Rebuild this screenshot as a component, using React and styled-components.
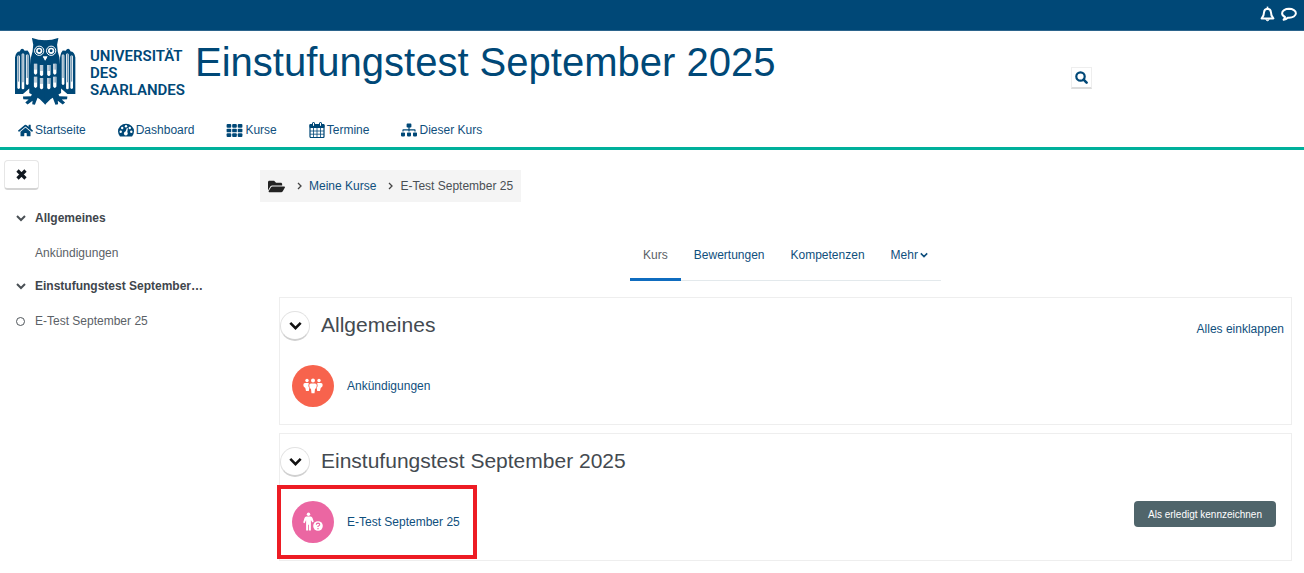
import React from 'react';
import styled, { createGlobalStyle } from 'styled-components'
import { FaHome, FaSitemap, FaFolderOpen } from 'react-icons/fa'


const colors = {
  blue: '#004877',
  link: '#0f4f7d',
  teal: '#00b09b',
  text: '#4a5055',
  line: '#eeeeee',
}

const GlobalStyle = createGlobalStyle`
  * {
    box-sizing: border-box;
  }
  body {
    margin: 0;
    background: #ffffff;
    color: ${colors.text};
    font-family: "Liberation Sans", Arial, sans-serif;
    font-size: 12px;
    line-height: 16px;
  }
  a {
    color: ${colors.link};
    text-decoration: none;
  }
  button {
    font-family: inherit;
    cursor: pointer;
  }
  svg {
    display: block;
    flex: none;
  }
`;

const TopBar = styled.div`
  display: flex;
  align-items: center;
  justify-content: flex-end;
  gap: 6px;
  height: 31px;
  padding: 0 7px 3px;
  background: ${colors.blue};
  border-bottom: 1px solid #2b648c;
`;

const IconButton = styled.button`
  padding: 0;
  border: 0;
  background: none;
  color: #ffffff;
`;

const Header = styled.header`
  border-bottom: 3px solid ${colors.teal};
`;

const Brand = styled.div`
  display: flex;
  align-items: flex-start;
  padding: 7px 212px 0 15px;
`;

const Logo = styled.a`
  display: flex;
  gap: 14px;
  color: ${colors.blue};
`;

const LogoText = styled.span`
  width: 96px;
  padding-top: 10px;
  font-family: Roboto, "Liberation Sans", sans-serif;
  font-size: 15px;
  font-weight: 600;
  line-height: 17px;
`;

const Title = styled.h1`
  margin: 0 0 0 9px;
  color: ${colors.blue};
  font-size: 40px;
  font-weight: 400;
  line-height: 48px;
`;

const SearchButton = styled.button`
  display: flex;
  align-items: center;
  justify-content: center;
  width: 21px;
  height: 22px;
  margin: 29px 0 0 auto;
  padding: 0;
  border: 1px solid #eeeeee;
  border-bottom: 2px solid #dcdcdc;
  background: #ffffff;
  color: ${colors.blue};
`;

const Nav = styled.nav`
  display: flex;
  gap: 32px;
  padding: 16px 18px 9px;
`;

const NavLink = styled.a`
  display: flex;
  align-items: center;
  gap: 2px;
  color: ${colors.link};

  svg {
    color: ${colors.blue};
  }
`;

const Page = styled.div`
  display: grid;
  grid-template-columns: 260px minmax(0, 1fr);
`;

const Sidebar = styled.aside`
  padding: 10px 4px;
`;

const CloseButton = styled.button`
  display: flex;
  align-items: center;
  justify-content: center;
  width: 35px;
  height: 30px;
  padding: 0;
  border: 1px solid #e6e6e6;
  border-bottom: 2px solid #d4d4d4;
  border-radius: 4px;
  background: #ffffff;
  color: #111820;
`;

const IndexList = styled.ul`
  margin: 20px 0 0;
  padding: 0 0 0 12px;
  list-style: none;
`;

const IndexItem = styled.li`
  display: grid;
  grid-template-columns: 10px 1fr;
  align-items: center;
  column-gap: 9px;
  height: 16px;
  margin-bottom: ${(props) => props.$section ? '19px' : '17px'};
  font-weight: ${(props) => props.$section ? 700 : 400};

  a {
    grid-column: 2;
    color: ${(props) => props.$section ? '#3f464c' : '#5b6166'};
  }
`;

const Dot = styled.span`
  width: 9px;
  height: 9px;
  border: 1px solid #50565b;
  border-radius: 50%;
`;

const Main = styled.main`
  padding: 20px 12px 0 0;
`;

const Breadcrumb = styled.nav`
  display: inline-flex;
  align-items: center;
  height: 32px;
  padding: 0 8px;
  background: #f4f4f4;

  > svg {
    margin: 0 7px 0 12px;
  }
`;

const FolderLink = styled.a`
  color: #222222;
`;

const Content = styled.div`
  padding-left: 19px;
`;

const Tabs = styled.nav`
  display: flex;
  width: fit-content;
  margin: 28px auto 16px;
  border-bottom: 1px solid #e3e9ec;
`;

const Tab = styled.a`
  display: flex;
  align-items: center;
  gap: 2px;
  height: 51px;
  margin-bottom: -1px;
  padding: 2px 13px 0;
  border-bottom: 3px solid ${(props) => props.$active ? '#0f6cbf' : 'transparent'};
  color: ${(props) => props.$active ? '#5b6166' : colors.link};
`;

const Section = styled.section`
  min-height: 128px;
  margin-bottom: 8px;
  border: 1px solid ${colors.line};
`;

const SectionHead = styled.div`
  display: flex;
  align-items: center;
  padding: 13px 7px 0 0;
`;

const Toggle = styled.button`
  display: flex;
  align-items: center;
  justify-content: center;
  width: 30px;
  height: 30px;
  padding: 0;
  border: 1px solid #e2e2e2;
  border-bottom: 2px solid #d0d0d0;
  border-radius: 50%;
  background: #ffffff;
  color: #111111;
`;

const SectionTitle = styled.h2`
  flex: 1;
  margin: 0 0 0 11px;
  padding-bottom: 2px;
  color: #444a50;
  font-size: 21px;
  font-weight: 400;
  line-height: 28px;
`;

const CollapseLink = styled.a`
  padding-top: 6px;
`;

const Activity = styled.div`
  position: relative;
  display: flex;
  align-items: center;
  margin-top: 12px;
  padding: 12px 15px 12px 12px;
`;

const ActivityIcon = styled.span`
  display: flex;
  align-items: center;
  justify-content: center;
  width: 42px;
  height: 42px;
  margin-right: 13px;
  border-radius: 50%;
  background: ${(props) => props.$color};
`;

const DoneButton = styled.button`
  align-self: flex-start;
  height: 26px;
  margin-left: auto;
  padding: 0 14px;
  border: 0;
  border-radius: 4px;
  background: #50656b;
  color: #ffffff;
  font-size: 10px;
`;

// red frame lying over the activity
const Highlight = styled.div`
  position: absolute;
  top: -4px;
  left: -3px;
  width: 200px;
  height: 74px;
  border: 4px solid #ed1c24;
  pointer-events: none;
`;


// one half of the bird, the other half is the same mirrored
const OwlHalf = () => (
  <>
    <path d="M101 18Q78 18 60 11L64 32L62 52L57 70V92Q56 58 47 49L38 50Q34 42 27 45L23 52Q12 52 9 70V180H33L52 164V177L60 182L57 187L33 188L34 196L50 197L40 206L47 212L62 201L61 211L69 213L77 192L84 196L100 212H101Z" fill="#004877" />
    <rect x="16" y="64" width="8" height="101" rx="4" fill="#fff" />
    <rect x="29" y="58" width="8" height="108" rx="4" fill="#fff" />
    <rect x="42" y="61" width="8" height="92" rx="4" fill="#fff" />
    <path d="M20 66V143M33 60V145M46 63V132" stroke="#5d86a5" strokeWidth="3" />
    <path d="M66 89h10v29q-5 8-10 0zM84 93h10v29q-5 8-10 0zM66 128h10v30q-5 8-10 0zM84 132h10v30q-5 8-10 0z" fill="#fff" />
    <path d="M69 89v18m4-18v18M87 93v18m4-18v18M69 128v18m4-18v18M87 132v18m4-18v18" stroke="#5d86a5" strokeWidth="2" />
    <circle cx="82" cy="50" r="14" fill="none" stroke="#fff" strokeWidth="3" />
    <circle cx="82" cy="50" r="7" fill="none" stroke="#fff" strokeWidth="5" />
    <path d="M93 67H101V79H100Z" fill="#fff" />
  </>
)

const Owl = () => (
  <svg width="61" height="68" viewBox="9 12 184 204" aria-hidden="true">
    <OwlHalf />
    <g transform="matrix(-1 0 0 1 200 0)"><OwlHalf /></g>
    <path d="M93 67H107L100 79Z" fill="#fff" />
  </svg>
)

const Bell = () => (
  <svg width="15" height="16" viewBox="0 0 15 16" fill="none" stroke="currentColor" strokeWidth="2">
    <path d="M1.600 12.400Q4 10 4 6.500Q4.200 3 7.500 2.800Q10.800 3 11 6.500Q11 10 13.400 12.400Z" strokeLinejoin="round" />
    <path d="M7.500 .6V2.800" strokeWidth="1.600" />
    <path d="M5.600 13.500Q7.500 16 9.400 13.500" fill="currentColor" strokeWidth="1" />
  </svg>
)

const Comment = () => (
  <svg width="16" height="16" viewBox="0 0 16 16" fill="none" stroke="currentColor" strokeWidth="2" strokeLinejoin="round">
    <path d="M8 2.800C4.200 2.800 1.100 4.800 1.100 7.300C1.100 8.900 2.300 10.200 4 11Q3.800 12.500 2.600 13.800Q5.200 13.300 6.700 11.700Q7.300 11.800 8 11.800C11.800 11.800 14.900 9.800 14.900 7.300S11.800 2.800 8 2.800Z" />
  </svg>
)

const Search = () => (
  <svg width="13" height="13" viewBox="0 0 13 13" fill="none" stroke="currentColor">
    <circle cx="5.500" cy="5.500" r="4.200" strokeWidth="2.200" />
    <path d="M8.600 8.600L11.600 11.600" strokeWidth="2.600" strokeLinecap="round" />
  </svg>
)

const Gauge = () => (
  <svg width="16" height="14" viewBox="0 0 16 14">
    <path d="M2 13.400Q0 11.200 0 8.500A8 7.800 0 0 1 16 8.500Q16 11.200 14 13.400Z" fill="currentColor" />
    <g fill="#fff">
      <circle cx="2.700" cy="8.800" r="1.200" />
      <circle cx="4.200" cy="5" r="1.200" />
      <circle cx="8" cy="3.300" r="1.200" />
      <circle cx="11.800" cy="5" r="1.200" />
      <circle cx="13.300" cy="8.800" r="1.200" />
      <circle cx="7.800" cy="10.500" r="1.900" />
      <path d="M7 10L8.900 5L9.900 5.300L9 10.500Z" />
    </g>
  </svg>
)

const Grid = () => (
  <svg width="17" height="13" viewBox="0 0 17 14" fill="currentColor">
    {[0, 5, 10].map((y) => [0, 6, 12].map((x) => (
      <rect key={`${x}-${y}`} x={x} y={y} width="5" height="4" rx="1" />
    )))}
  </svg>
)

const Calendar = () => (
  <svg width="16" height="16" viewBox="0 0 16 16" fill="none" stroke="currentColor">
    <rect x="1" y="2.500" width="14" height="13" rx="1" strokeWidth="1.200" />
    <path d="M1 2.500H15V5.500H1Z" fill="currentColor" />
    <path d="M4.500 1.500V4M11.500 1.500V4" strokeWidth="3" strokeLinecap="round" />
    <path d="M4.500 1V3.800M11.500 1V3.800" stroke="#fff" strokeWidth="1" />
    <path d="M1 9H15M1 12.200H15M4.500 5V15.500M8 5V15.500M11.500 5V15.500" strokeWidth=".8" />
  </svg>
)

const Cross = () => (
  <svg width="11" height="11" viewBox="0 0 11 11" stroke="currentColor" strokeWidth="3.200">
    <path d="M1.500 1.500L9.500 9.500M9.500 1.500L1.500 9.500" />
  </svg>
)

const Chevron = ({ size = 10, weight = 2 }) => (
  <svg width={size} height={size} viewBox="0 0 10 10" fill="none" stroke="currentColor" strokeWidth={weight}>
    <path d="M1 3L5 7L9 3" />
  </svg>
)

const Separator = () => (
  <svg width="5" height="8" viewBox="0 0 5 8" fill="none" stroke="#444" strokeWidth="1.300">
    <path d="M1 1L4 4L1 7" />
  </svg>
)

const People = () => (
  <svg width="20" height="16" viewBox="0 0 20 16" fill="#fff">
    <circle cx="4" cy="2.500" r="1.700" />
    <circle cx="16" cy="2.500" r="1.700" />
    <path d="M2 5H5.800Q4.800 7.500 6.300 10.200L5.800 13H3L2.300 10Q.3 9 .3 7Q.4 5.200 2 5Z" />
    <path d="M18 5H14.200Q15.200 7.500 13.700 10.200L14.200 13H17L17.700 10Q19.700 9 19.700 7Q19.600 5.200 18 5Z" />
    <circle cx="10" cy="2.600" r="2" />
    <path d="M8 5.600H12Q13.800 5.800 13.800 7.600Q13.800 10 12 11L11.500 15.200H8.500L8 11Q6.200 10 6.200 7.600Q6.200 5.800 8 5.600Z" />
  </svg>
)

const PersonQuestion = () => (
  <svg width="20" height="20" viewBox="0 0 20 20" fill="#fff">
    <circle cx="5.500" cy="2.200" r="1.700" />
    <path d="M3.200 4.600H7.800Q9 4.700 9.500 6L10.700 9.500L9.400 10.600L7.900 8V18.500H5.900V12.800H5.100V18.500H3.100V8L1.600 11.300L.2 10.600L1.500 6Q2 4.700 3.200 4.600Z" />
    <circle cx="15" cy="14" r="4.800" />
    <path d="M13.300 12.700Q13.400 11.200 15 11.200Q16.700 11.300 16.700 12.700Q16.600 13.500 15 14.300V15M15 16V17.200" fill="none" stroke="#eb66a2" strokeWidth="1.200" />
  </svg>
)


const navItems = [
  { label: 'Startseite', icon: <FaHome size={15} /> },
  { label: 'Dashboard', icon: <Gauge /> },
  { label: 'Kurse', icon: <Grid /> },
  { label: 'Termine', icon: <Calendar /> },
  { label: 'Dieser Kurs', icon: <FaSitemap size={16} /> },
]

const App = () => {
  return (
    <>
    <GlobalStyle />
    <TopBar>
      <IconButton aria-label="Mitteilungen"><Bell /></IconButton>
      <IconButton aria-label="Nachrichten"><Comment /></IconButton>
    </TopBar>
    <Header>
      <Brand>
        <Logo href="#">
          <Owl />
          <LogoText>UNIVERSITÄT<br />DES<br />SAARLANDES</LogoText>
        </Logo>
        <Title>Einstufungstest September 2025</Title>
        <SearchButton aria-label="Suche"><Search /></SearchButton>
      </Brand>
      <Nav>
        {navItems.map(({ label, icon }) => (
          <NavLink href="#" key={label}>{icon}{label}</NavLink>
        ))}
      </Nav>
    </Header>
    <Page>
      <Sidebar>
        <CloseButton aria-label="Schließen"><Cross /></CloseButton>
        <IndexList>
          <IndexItem $section><Chevron /><a href="#">Allgemeines</a></IndexItem>
          <IndexItem><a href="#">Ankündigungen</a></IndexItem>
          <IndexItem $section><Chevron /><a href="#">Einstufungstest September…</a></IndexItem>
          <IndexItem><Dot /><a href="#">E-Test September 25</a></IndexItem>
        </IndexList>
      </Sidebar>
      <Main>
        <Breadcrumb>
          <FolderLink href="#" aria-label="Kursbereich"><FaFolderOpen size={17} /></FolderLink>
          <Separator />
          <a href="#">Meine Kurse</a>
          <Separator />
          <span>E-Test September 25</span>
        </Breadcrumb>
        <Content>
          <Tabs>
            <Tab href="#" $active>Kurs</Tab>
            <Tab href="#">Bewertungen</Tab>
            <Tab href="#">Kompetenzen</Tab>
            <Tab href="#">Mehr <Chevron size={8} weight={2} /></Tab>
          </Tabs>
          <Section>
            <SectionHead>
              <Toggle aria-label="Allgemeines einklappen"><Chevron size={13} weight={2} /></Toggle>
              <SectionTitle>Allgemeines</SectionTitle>
              <CollapseLink href="#">Alles einklappen</CollapseLink>
            </SectionHead>
            <Activity>
              <ActivityIcon $color="#f7634d"><People /></ActivityIcon>
              <a href="#">Ankündigungen</a>
            </Activity>
          </Section>
          <Section>
            <SectionHead>
              <Toggle aria-label="Einstufungstest einklappen"><Chevron size={13} weight={2} /></Toggle>
              <SectionTitle>Einstufungstest September 2025</SectionTitle>
            </SectionHead>
            <Activity>
              <ActivityIcon $color="#eb66a2"><PersonQuestion /></ActivityIcon>
              <a href="#">E-Test September 25</a>
              <DoneButton>Als erledigt kennzeichnen</DoneButton>
              <Highlight />
            </Activity>
          </Section>
        </Content>
      </Main>
    </Page>
    </>
  );
}

export default App;
